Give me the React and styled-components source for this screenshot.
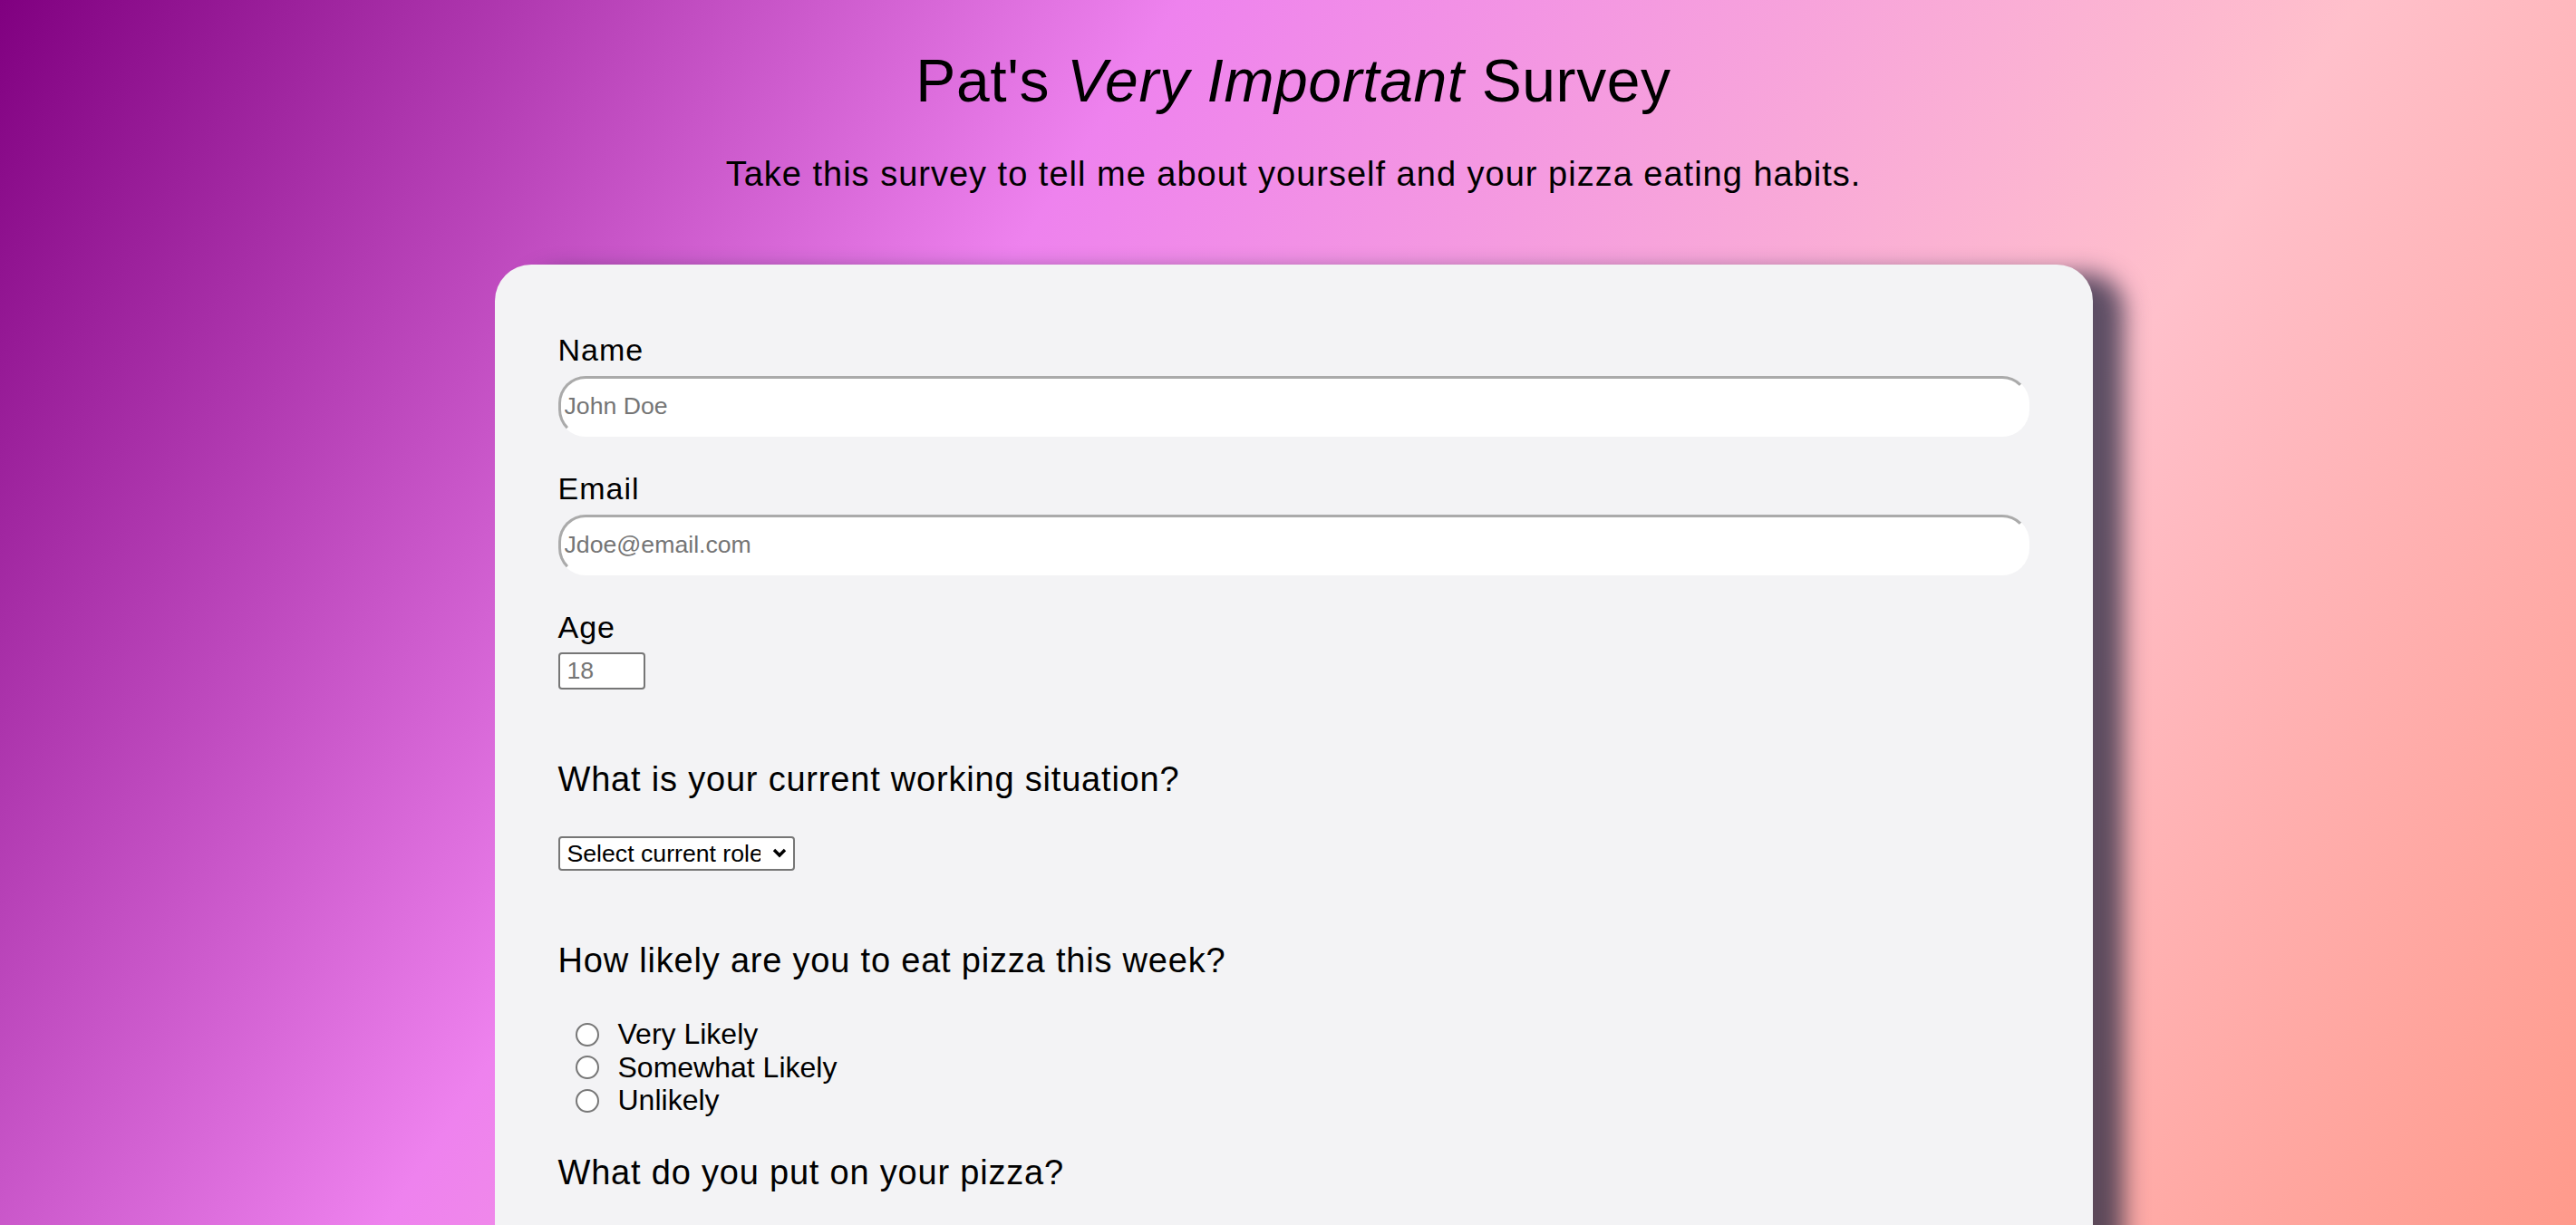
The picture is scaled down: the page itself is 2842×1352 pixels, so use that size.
import React, { useState } from 'react';
import styled, { createGlobalStyle } from 'styled-components';

const GlobalStyle = createGlobalStyle`
  html, body {
    margin: 0;
    padding: 0;
  }
  body {
    font-family: "Liberation Sans", Arial, sans-serif;
    color: #000;
    min-height: 100vh;
    background: linear-gradient(123deg, #800080 0%, #ee82ee 35%, #ffc0cb 70%, #ff9a8b 100%) fixed;
  }
`;

const Page = styled.div`
  padding: 53px 0 120px 12px;
`;

const Title = styled.h1`
  margin: 0;
  font-size: 66px;
  font-weight: normal;
  letter-spacing: 0.6px;
  line-height: 73.5px;
  text-align: center;
`;

const Subtitle = styled.p`
  margin: 45px 0 0;
  font-size: 38px;
  letter-spacing: 1px;
  line-height: 41.4px;
  text-align: center;
`;

const Card = styled.form`
  box-sizing: border-box;
  width: 1763px;
  margin: 79px auto 0;
  padding: 76px 70px 90px;
  background: #f3f3f5;
  border-radius: 40px;
  box-shadow: 34px 10px 26px rgba(30, 35, 60, 0.72);
`;

const Field = styled.div`
  display: flex;
  flex-direction: column;
  align-items: flex-start;

  & + & {
    margin-top: 39px;
  }
`;

const Label = styled.label`
  font-size: 34px;
  letter-spacing: 1px;
  line-height: 36.8px;
  margin-bottom: 10px;
`;

const TextInput = styled.input`
  box-sizing: border-box;
  width: 100%;
  height: 67px;
  padding: 0 4px;
  font-family: "Liberation Sans", Arial, sans-serif;
  font-size: 26.67px;
  background: #fff;
  border: 3px solid;
  border-color: #aaa #fff #fff #aaa;
  border-radius: 30px;
  outline: none;

  &::placeholder {
    color: #757575;
  }
`;

const AgeInput = styled.input`
  box-sizing: border-box;
  width: 96px;
  height: 41px;
  padding: 0 8px;
  font-family: "Liberation Sans", Arial, sans-serif;
  font-size: 26.67px;
  background: #fff;
  border: 2px solid #767676;
  border-radius: 4px;

  &::placeholder {
    color: #757575;
  }
`;

const Question = styled.h3`
  margin: ${p => (p.$tight ? 40 : 78)}px 0 41px;
  font-size: 38px;
  font-weight: normal;
  letter-spacing: 0.8px;
  line-height: 43px;
`;

const SelectWrap = styled.div`
  position: relative;
  display: inline-block;
`;

const Select = styled.select`
  appearance: none;
  box-sizing: border-box;
  width: 261px;
  height: 38px;
  padding: 0 36px 0 8px;
  font-family: "Liberation Sans", Arial, sans-serif;
  font-size: 26.67px;
  color: #000;
  background: #fff;
  border: 2px solid #767676;
  border-radius: 4px;
`;

const Chevron = styled.svg`
  position: absolute;
  right: 9px;
  top: 13px;
  pointer-events: none;
`;

const Options = styled.div`
  display: flex;
  flex-direction: column;
  padding-left: 19px;
`;

const OptionRow = styled.label`
  display: flex;
  align-items: center;
  gap: 21px;
  height: 36.6px;
  font-size: 32px;
`;

const Radio = styled.input`
  appearance: none;
  box-sizing: border-box;
  width: 26px;
  height: 26px;
  margin: 0;
  border: 2px solid #777;
  border-radius: 50%;
  background: #fff;

  &:checked {
    background: radial-gradient(circle, #0a64d8 0 6px, #fff 7px);
    border-color: #0a64d8;
  }
`;

const Check = styled.input`
  appearance: none;
  box-sizing: border-box;
  width: 26px;
  height: 26px;
  margin: 0;
  border: 2px solid #777;
  border-radius: 4px;
  background: #fff;

  &:checked {
    background: #0a64d8;
    border-color: #0a64d8;
  }
`;

const likely = ['Very Likely', 'Somewhat Likely', 'Unlikely'];
const toppings = ['Pepperoni', 'Mushrooms', 'Onions', 'Sausage', 'Extra cheese'];

export default function App() {
  const [choice, setChoice] = useState('');

  return (
    <>
      <GlobalStyle />
      <Page>
        <Title>
          Pat's <em>Very Important</em> Survey
        </Title>
        <Subtitle>Take this survey to tell me about yourself and your pizza eating habits.</Subtitle>

        <Card onSubmit={e => e.preventDefault()}>
          <Field>
            <Label htmlFor="name">Name</Label>
            <TextInput id="name" type="text" placeholder="John Doe" />
          </Field>
          <Field>
            <Label htmlFor="email">Email</Label>
            <TextInput id="email" type="email" placeholder="Jdoe@email.com" />
          </Field>
          <Field>
            <Label htmlFor="age">Age</Label>
            <AgeInput id="age" type="number" placeholder="18" />
          </Field>

          <Question>What is your current working situation?</Question>
          <SelectWrap>
            <Select defaultValue="">
              <option value="" disabled>Select current role</option>
              <option>Student</option>
              <option>Full time job</option>
              <option>Part time job</option>
              <option>Other</option>
            </Select>
            <Chevron width="16" height="11" viewBox="0 0 16 11">
              <path d="M2 2 L8 8 L14 2" stroke="#000" strokeWidth="3.4" fill="none" />
            </Chevron>
          </SelectWrap>

          <Question>How likely are you to eat pizza this week?</Question>
          <Options>
            {likely.map(l => (
              <OptionRow key={l}>
                <Radio
                  type="radio"
                  name="likely"
                  checked={choice === l}
                  onChange={() => setChoice(l)}
                />
                {l}
              </OptionRow>
            ))}
          </Options>

          <Question $tight>What do you put on your pizza?</Question>
          <Options>
            {toppings.map(t => (
              <OptionRow key={t}>
                <Check type="checkbox" />
                {t}
              </OptionRow>
            ))}
          </Options>
        </Card>
      </Page>
    </>
  );
}
